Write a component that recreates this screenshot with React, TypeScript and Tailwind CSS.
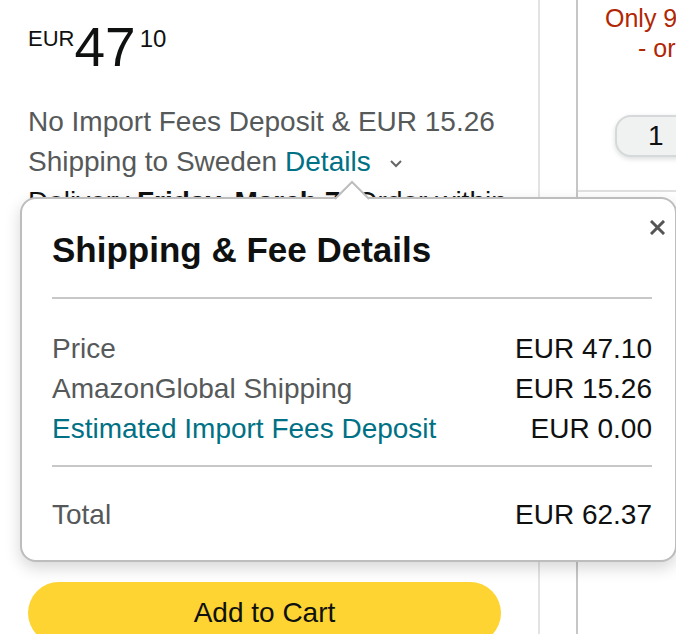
import React from 'react'

// ── Amazon buy box with shipping & fee popover ───────────────────────────────

const font = { fontFamily: '"Liberation Sans", Arial, sans-serif' }

function FeeRow({ label, value, link = false }: { label: string; value: string; link?: boolean }) {
  return (
    <div className="flex items-center justify-between text-[28px] leading-[40px]">
      <span className={link ? 'text-[#007185]' : 'text-[#565959]'}>{label}</span>
      <span className="text-[#0F1111]">{value}</span>
    </div>
  )
}

function FeePopover() {
  return (
    <div className="absolute left-[20px] top-[197px] w-[657px] h-[365px] bg-white border-2 border-[#bdbdbd] rounded-[16px] shadow-[0_6px_16px_rgba(0,0,0,0.16)]">
      {/* arrow */}
      <svg className="absolute left-[313px] top-[-19px]" width="34" height="21" viewBox="0 0 34 21">
        <polygon points="0,19 17,2 34,19 34,21 0,21" fill="#fff" />
        <polyline points="0,19 17,2 34,19" fill="none" stroke="#bdbdbd" strokeWidth="2" />
      </svg>

      {/* close */}
      <button className="absolute right-[10px] top-[20px] w-[16px] h-[16px] flex items-center justify-center">
        <svg width="15" height="15" viewBox="0 0 15 15">
          <path d="M2 2 L13 13 M13 2 L2 13" stroke="#555" strokeWidth="3" strokeLinecap="square" />
        </svg>
      </button>

      <div className="pl-[30px] pr-[23px] pt-[29px]">
        <h3 className="text-[35px] leading-[44px] font-bold text-[#0F1111]">Shipping &amp; Fee Details</h3>
        <div className="mt-[25px] h-[2px] bg-[#c8c8c8]" />
        <div className="mt-[30px]">
          <FeeRow label="Price" value="EUR 47.10" />
          <FeeRow label="AmazonGlobal Shipping" value="EUR 15.26" />
          <FeeRow label="Estimated Import Fees Deposit" value="EUR 0.00" link />
        </div>
        <div className="mt-[16px] h-[2px] bg-[#c8c8c8]" />
        <div className="mt-[28px]">
          <FeeRow label="Total" value="EUR 62.37" />
        </div>
      </div>
    </div>
  )
}

export default function App() {
  return (
    <div className="relative w-[676px] h-[634px] overflow-hidden bg-white" style={font}>
      <div className="flex h-full">
        {/* left column */}
        <div className="w-[540px] shrink-0 border-r-2 border-[#e3e3e3] pl-[28px] pt-[20px]">
          <div className="flex items-start text-[#0F1111]">
            <span className="text-[22px] leading-[22px] mt-[8px]">EUR</span>
            <span className="text-[55px] leading-[54px]">47</span>
            <span className="text-[24px] leading-[24px] mt-[7px] ml-[4px]">10</span>
          </div>

          <div className="mt-[28px] text-[28px] leading-[40px] text-[#565959]">
            <div>No Import Fees Deposit &amp; EUR 15.26</div>
            <div className="flex items-center">
              <span>Shipping to Sweden</span>
              <span className="ml-[8px] text-[#007185]">Details</span>
              <svg className="ml-[18px] mt-[2px]" width="14" height="9" viewBox="0 0 14 9">
                <polyline points="2,2 7,7 12,2" fill="none" stroke="#666" strokeWidth="2" />
              </svg>
            </div>
            <div className="text-[#0F1111]">
              Delivery <span className="font-bold">Friday, March 7</span>. Order within
            </div>
          </div>

          <div className="h-[360px]" />

          <button className="w-[473px] h-[62px] rounded-full bg-[#FDD431] text-[28px] text-[#0F1111]">
            Add to Cart
          </button>
        </div>

        {/* gap column */}
        <div className="w-[38px] shrink-0 border-r-2 border-[#c6c6c6]" />

        {/* right column */}
        <div className="w-[300px] shrink-0">
          <div className="pt-[3px] text-[25px] leading-[30px] text-[#B12704] whitespace-nowrap">
            <div className="pl-[27px]">Only 9 left in stock</div>
            <div className="pl-[60px]">- order soon.</div>
          </div>
          <div className="mt-[52px] ml-[37px] w-[160px] h-[42px] flex items-center pl-[31px] rounded-[16px] bg-[#F0F2F2] border-2 border-[#D5D9D9] shadow-[0_2px_5px_rgba(15,17,17,0.15)] text-[28px] text-[#0F1111]">
            1
          </div>
          <div className="mt-[33px] h-[2px] bg-[#e0e0e0]" />
        </div>
      </div>

      <FeePopover />
    </div>
  )
}
